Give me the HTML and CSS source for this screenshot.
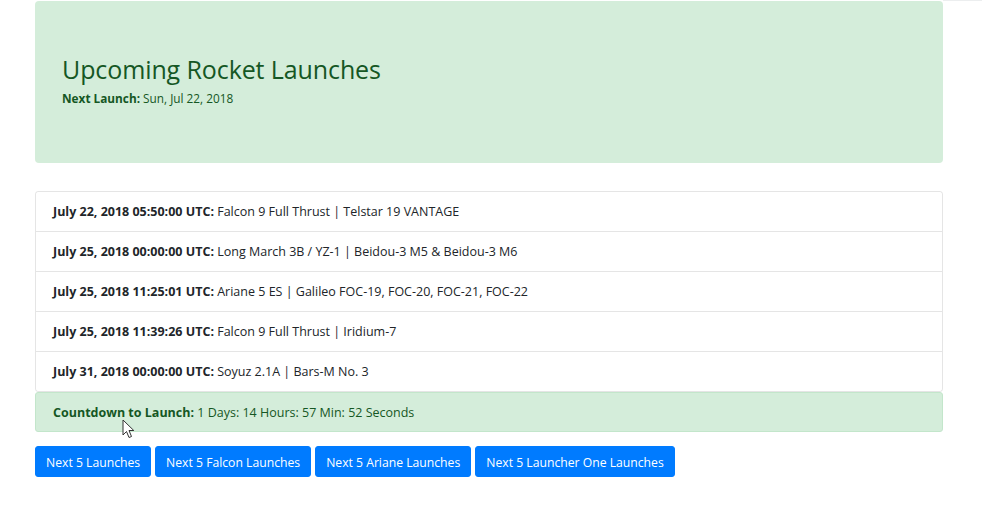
FILE: index.html
```html
<!DOCTYPE html>
<html lang="en">
<head>
<meta charset="utf-8">
<title>Upcoming Rocket Launches</title>
<link rel="stylesheet" href="styles.css">
</head>
<body>
<div class="topline"></div>
<div class="container">
  <div class="jumbotron">
    <h1 class="title">Upcoming Rocket Launches</h1>
    <p class="next"><b>Next Launch:</b> Sun, Jul 22, 2018</p>
  </div>
  <ul class="list">
    <li class="item"><b>July 22, 2018 05:50:00 UTC:</b> Falcon 9 Full Thrust | Telstar 19 VANTAGE</li>
    <li class="item"><b>July 25, 2018 00:00:00 UTC:</b> Long March 3B / YZ-1 | Beidou-3 M5 &amp; Beidou-3 M6</li>
    <li class="item"><b>July 25, 2018 11:25:01 UTC:</b> Ariane 5 ES | Galileo FOC-19, FOC-20, FOC-21, FOC-22</li>
    <li class="item"><b>July 25, 2018 11:39:26 UTC:</b> Falcon 9 Full Thrust | Iridium-7</li>
    <li class="item"><b>July 31, 2018 00:00:00 UTC:</b> Soyuz 2.1A | Bars-M No. 3</li>
  </ul>
  <div class="alert"><b>Countdown to Launch:</b> 1 Days: 14 Hours: 57 Min: 52 Seconds</div>
  <div class="buttons">
    <button class="btn">Next 5 Launches</button>
    <button class="btn">Next 5 Falcon Launches</button>
    <button class="btn">Next 5 Ariane Launches</button>
    <button class="btn">Next 5 Launcher One Launches</button>
  </div>
</div>
<svg class="cursor" width="13" height="20" viewBox="0 0 13 20">
  <path d="M1 1 L1 16 L4.5 12.5 L7 18.5 L9.5 17.5 L7 11.5 L11.8 11.5 Z" fill="#fff" stroke="#333" stroke-width="1" stroke-linejoin="round"/>
</svg>
</body>
</html>
```
FILE: styles.css
```css
html, body {
  margin: 0;
  padding: 0;
  background: #fff;
}
body {
  font-family: "Open Sans", "Noto Sans", sans-serif;
  font-size: 12.8px;
  line-height: 1.5;
  color: #212529;
  position: relative;
  height: 530px;
  overflow: hidden;
}
.topline {
  height: 1px;
  background: #eceeef;
  margin-left: 943px;
  margin-bottom: -1px;
}
.container {
  width: 908px;
  margin-left: 35px;
}
.jumbotron {
  background: #d4edda;
  color: #155724;
  border-radius: 4px;
  margin-top: 1px;
  height: 162px;
  box-sizing: border-box;
  padding: 53px 27px 0;
  margin-bottom: 28px;
}
.title {
  margin: 0;
  font-weight: 400;
  font-size: 25px;
  line-height: 1.2;
  letter-spacing: -0.1px;
}
.next {
  margin: 6px 0 0;
  font-size: 11.8px;
}
.list {
  list-style: none;
  margin: 0;
  padding: 0;
  border: 1px solid rgba(0,0,0,.1);
  border-radius: 3px;
}
.item {
  height: 40px;
  box-sizing: border-box;
  padding: 11px 17px 0;
  border-bottom: 1px solid rgba(0,0,0,.1);
  font-size: 12.5px;
}
.item:last-child {
  border-bottom: 0;
  height: 39px;
}
.item b, .alert b { font-weight: 700; }
.alert {
  background: #d4edda;
  color: #155724;
  border: 1px solid #c3e6cb;
  border-radius: 3px;
  height: 40px;
  box-sizing: border-box;
  padding: 11px 17px 0;
  margin: 0 0 14px;
  font-size: 12.5px;
}
.buttons {
  display: flex;
  gap: 4px;
}
.btn {
  font-family: inherit;
  font-size: 12.2px;
  line-height: 1.5;
  color: #fff;
  background: #007bff;
  border: 1px solid #007bff;
  border-radius: 3px;
  height: 31px;
  padding: 3px 10px 0;
  cursor: pointer;
}
.cursor {
  position: absolute;
  left: 122px;
  top: 419px;
}
```
